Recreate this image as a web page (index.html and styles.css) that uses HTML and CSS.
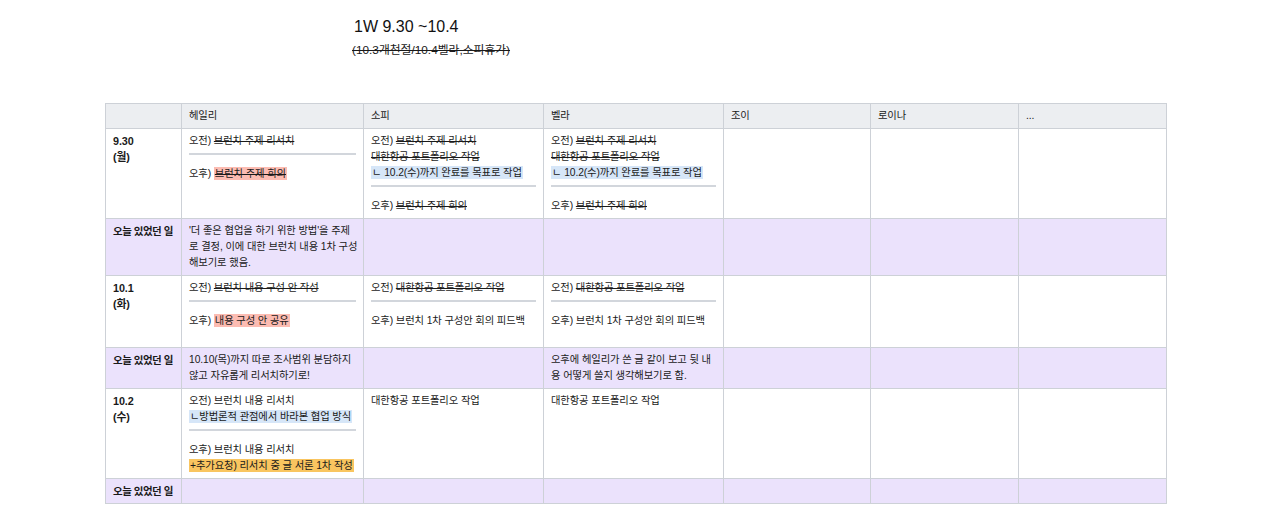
FILE: index.html
```html
<!DOCTYPE html>
<html lang="ko">
<head>
<meta charset="utf-8">
<title>1W 9.30 ~10.4</title>
<link rel="stylesheet" href="styles.css">
</head>
<body>
<div class="page">
  <header class="post-head">
    <h1 class="title">1W 9.30 ~10.4</h1>
    <p class="subtitle"><s>(10.3개천절/10.4벨라,소피휴가)</s></p>
  </header>

  <table class="schedule">
    <colgroup>
      <col class="c-date">
      <col class="c-wide">
      <col class="c-mid">
      <col class="c-mid">
      <col class="c-joy">
      <col class="c-narrow">
      <col class="c-narrow">
    </colgroup>
    <thead>
      <tr>
        <th></th>
        <th>헤일리</th>
        <th>소피</th>
        <th>벨라</th>
        <th>조이</th>
        <th>로이나</th>
        <th>...</th>
      </tr>
    </thead>
    <tbody>
      <tr>
        <td class="date"><p>9.30</p><p>(월)</p></td>
        <td>
          <p>오전) <s>브런치 주제 리서치</s></p>
          <hr class="sep">
          <p>오후) <span class="hl hl-red"><s>브런치 주제 회의</s></span></p>
        </td>
        <td>
          <p>오전) <s>브런치 주제 리서치</s></p>
          <p><s>대한항공 포트폴리오 작업</s></p>
          <p><span class="hl hl-blue">ㄴ 10.2(수)까지 완료를 목표로 작업</span></p>
          <hr class="sep">
          <p>오후) <s>브런치 주제 회의</s></p>
        </td>
        <td>
          <p>오전) <s>브런치 주제 리서치</s></p>
          <p><s>대한항공 포트폴리오 작업</s></p>
          <p><span class="hl hl-blue">ㄴ 10.2(수)까지 완료를 목표로 작업</span></p>
          <hr class="sep">
          <p>오후) <s>브런치 주제 회의</s></p>
        </td>
        <td></td>
        <td></td>
        <td></td>
      </tr>
      <tr class="today">
        <td class="label">오늘 있었던 일</td>
        <td><p>'더 좋은 협업을 하기 위한 방법'을 주제<br>로 결정, 이에 대한 브런치 내용 1차 구성<br>해보기로 했음.</p></td>
        <td></td>
        <td></td>
        <td></td>
        <td></td>
        <td></td>
      </tr>
      <tr>
        <td class="date"><p>10.1</p><p>(화)</p></td>
        <td>
          <p>오전) <s>브런치 내용 구성 안 작성</s></p>
          <hr class="sep">
          <p>오후) <span class="hl hl-red">내용 구성 안 공유</span></p>
          <p class="blank"></p>
        </td>
        <td>
          <p>오전) <s>대한항공 포트폴리오 작업</s></p>
          <hr class="sep">
          <p>오후) 브런치 1차 구성안 회의 피드백</p>
        </td>
        <td>
          <p>오전) <s>대한항공 포트폴리오 작업</s></p>
          <hr class="sep">
          <p>오후) 브런치 1차 구성안 회의 피드백</p>
        </td>
        <td></td>
        <td></td>
        <td></td>
      </tr>
      <tr class="today">
        <td class="label">오늘 있었던 일</td>
        <td><p>10.10(목)까지 따로 조사범위 분담하지<br>않고 자유롭게 리서치하기로!</p></td>
        <td></td>
        <td><p>오후에 헤일리가 쓴 글 같이 보고 뒷 내<br>용 어떻게 쓸지 생각해보기로 함.</p></td>
        <td></td>
        <td></td>
        <td></td>
      </tr>
      <tr>
        <td class="date"><p>10.2</p><p>(수)</p></td>
        <td>
          <p>오전) 브런치 내용 리서치</p>
          <p><span class="hl hl-blue">ㄴ방법론적 관점에서 바라본 협업 방식</span></p>
          <hr class="sep">
          <p>오후) 브런치 내용 리서치</p>
          <p><span class="hl hl-orange">+추가요청) 리서치 중 글 서론 1차 작성</span></p>
        </td>
        <td><p>대한항공 포트폴리오 작업</p></td>
        <td><p>대한항공 포트폴리오 작업</p></td>
        <td></td>
        <td></td>
        <td></td>
      </tr>
      <tr class="today">
        <td class="label">오늘 있었던 일</td>
        <td></td>
        <td></td>
        <td></td>
        <td></td>
        <td></td>
        <td></td>
      </tr>
    </tbody>
  </table>
</div>
</body>
</html>
```

FILE: styles.css
```css
* {
  box-sizing: border-box;
}

html, body {
  margin: 0;
  padding: 0;
  background: #ffffff;
}

body {
  font-family: "Liberation Sans", "Noto Sans CJK KR", sans-serif;
  color: #1a1a1a;
}

.page {
  padding-top: 15px;
}

.post-head {
  width: 572px;
  margin: 0 auto;
}

.title {
  margin: 0;
  font-size: 16px;
  font-weight: 400;
  line-height: 24px;
  color: #111111;
}

.subtitle {
  margin: 3px 0 0 -2px;
  font-size: 11.8px;
  line-height: 17px;
  color: #1a1a1a;
}

.schedule {
  margin: 44px 0 0 105px;
  width: 1061px;
  table-layout: fixed;
  border-collapse: collapse;
  font-size: 10.3px;
  line-height: 16px;
  letter-spacing: -0.1px;
}

.c-date { width: 76px; }
.c-wide { width: 182px; }
.c-mid { width: 180px; }
.c-joy { width: 147px; }
.c-narrow { width: 148px; }

.schedule th,
.schedule td {
  border: 1px solid #cdd1d7;
  padding: 4px 7px;
  vertical-align: top;
  text-align: left;
}

.schedule th {
  background: #eceef1;
  font-weight: 400;
}

.schedule td.date {
  font-weight: 700;
  font-size: 10.8px;
}

.schedule td.label {
  font-weight: 700;
  font-size: 10.5px;
  letter-spacing: -0.5px;
  white-space: nowrap;
}

.schedule p {
  margin: 0;
  white-space: nowrap;
}

.schedule s {
  text-decoration-thickness: 1px;
}

.blank {
  height: 14px;
}

.today td {
  background: #ebe2fc;
}

.sep {
  border: 0;
  height: 2px;
  background: #d2d6dc;
  margin: 4px 0 11px;
}

.hl {
  padding: 1px 1px;
}

.hl-red {
  background: #fcbcb2;
}

.hl-blue {
  background: #d6e6f8;
}

.hl-orange {
  background: #f9c560;
}
```
